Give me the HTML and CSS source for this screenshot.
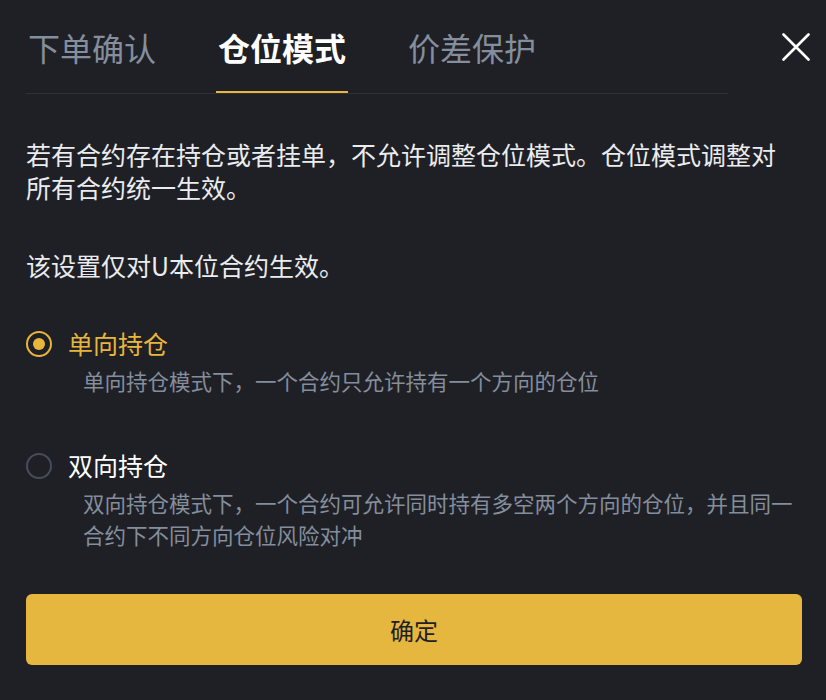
FILE: index.html
```html
<!DOCTYPE html>
<html lang="zh-CN">
<head>
<meta charset="utf-8">
<title>仓位模式</title>
<link rel="stylesheet" href="styles.css">
</head>
<body>
<div class="modal">
  <div class="header">
    <div class="tabs">
      <div class="tab">下单确认</div>
      <div class="tab active">仓位模式</div>
      <div class="tab">价差保护</div>
    </div>
    <button class="close" aria-label="关闭">
      <svg width="28" height="28" viewBox="0 0 28 28"><path d="M1.5 1.5 L26.5 26.5 M26.5 1.5 L1.5 26.5" stroke="#ffffff" stroke-width="2.6" stroke-linecap="round" fill="none"/></svg>
    </button>
  </div>
  <div class="content">
    <p class="desc">若有合约存在持仓或者挂单，不允许调整仓位模式。仓位模式调整对所有合约统一生效。</p>
    <p class="desc note">该设置仅对U本位合约生效。</p>
    <div class="option selected">
      <div class="opt-head">
        <span class="radio"></span>
        <span class="opt-label">单向持仓</span>
      </div>
      <div class="opt-sub">单向持仓模式下，一个合约只允许持有一个方向的仓位</div>
    </div>
    <div class="option">
      <div class="opt-head">
        <span class="radio"></span>
        <span class="opt-label">双向持仓</span>
      </div>
      <div class="opt-sub">双向持仓模式下，一个合约可允许同时持有多空两个方向的仓位，并且同一合约下不同方向仓位风险对冲</div>
    </div>
    <button class="confirm">确定</button>
  </div>
</div>
</body>
</html>
```

FILE: styles.css
```css
* { box-sizing: border-box; }
html, body {
  margin: 0;
  padding: 0;
  background: #1f2026;
  font-family: "Noto Sans CJK SC", "Noto Sans", sans-serif;
}
.modal {
  width: 826px;
  height: 700px;
  background: #1f2026;
}
.header {
  display: flex;
  padding-top: 23px;
  padding-left: 26px;
}
.tabs {
  display: flex;
  width: 702px;
  gap: 58px;
  border-bottom: 1px solid #2e3138;
}
.tab {
  font-size: 32px;
  line-height: 48px;
  color: #848e9c;
  padding: 0 2px 20px;
  border-bottom: 2px solid transparent;
  white-space: nowrap;
}
.tab.active {
  color: #ffffff;
  font-weight: 700;
  border-bottom-color: #e8b63c;
}
.close {
  margin-left: auto;
  margin-right: 16px;
  margin-top: 10px;
  width: 28px;
  height: 28px;
  padding: 0;
  border: 0;
  background: none;
  display: flex;
  align-self: flex-start;
}
.content {
  padding: 0 24px 0 26px;
  display: flex;
  flex-direction: column;
}
.desc {
  margin: 44px 0 0;
  max-width: 760px;
  font-size: 25px;
  line-height: 33px;
  color: #eaecef;
}
.desc.note { margin-top: 45px; }
.option { margin-top: 45px; }
.option + .option { margin-top: 52px; }
.opt-head {
  display: flex;
  align-items: center;
  gap: 16px;
}
.radio {
  width: 26px;
  height: 26px;
  border-radius: 50%;
  border: 2px solid #474d57;
  display: flex;
  align-items: center;
  justify-content: center;
  flex: none;
}
.option.selected .radio { border-color: #e8b63c; }
.option.selected .radio::after {
  content: "";
  width: 12px;
  height: 12px;
  border-radius: 50%;
  background: #e8b63c;
}
.opt-label {
  font-size: 25px;
  line-height: 33px;
  color: #ffffff;
}
.option.selected .opt-label { color: #e8b63c; }
.opt-sub {
  margin-top: 5px;
  padding-left: 57px;
  font-size: 21.5px;
  line-height: 32px;
  color: #848e9c;
}
.confirm {
  margin-top: 43px;
  height: 71px;
  width: 100%;
  border: 0;
  border-radius: 6px;
  background: #e6b73e;
  color: #1f2026;
  font-family: "Noto Sans CJK SC", "Noto Sans", sans-serif;
  font-size: 24px;
}
```
